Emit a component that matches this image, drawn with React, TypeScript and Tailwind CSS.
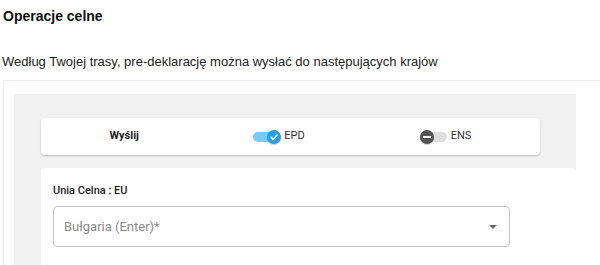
import React from "react";

function Toggle({ on, label }: { on: boolean; label: string }) {
  return (
    <div className="flex items-center">
      <div className="relative w-[28px] h-[14px] flex items-center">
        <div
          className={
            on
              ? "w-[27px] h-[10px] rounded-full bg-[#80c9f0]"
              : "w-[27px] h-[10px] rounded-full bg-[#dedede]"
          }
        />
        {on ? (
          <div className="absolute right-0 top-0 w-[14px] h-[14px] rounded-full bg-[#2b9de3] flex items-center justify-center shadow-[0_1px_1px_rgba(0,0,0,0.2)]">
            <svg width="10" height="10" viewBox="0 0 10 10">
              <path d="M2 5.2 L4.2 7.3 L8 3" fill="none" stroke="#ffffff" strokeWidth="1.6" strokeLinecap="round" strokeLinejoin="round" />
            </svg>
          </div>
        ) : (
          <div className="absolute left-0 top-0 w-[14px] h-[14px] rounded-full bg-[#545454] flex items-center justify-center shadow-[0_1px_1px_rgba(0,0,0,0.2)]">
            <div className="w-[8px] h-[2px] bg-white" />
          </div>
        )}
      </div>
      <span className="ml-[3px] text-[11px] text-[#333] font-['Roboto',sans-serif]">{label}</span>
    </div>
  );
}

export default function App() {
  return (
    <div className="w-[600px] h-[265px] overflow-hidden bg-white">
      <div className="h-[26px] pt-[6px] pl-[3px] leading-[20px] text-[14px] font-bold text-[#111] font-['Liberation_Sans',Arial,sans-serif]">
        Operacje celne
      </div>
      <div className="mt-[27px] pl-[2px] h-[17px] leading-[17px] text-[13px] text-[#222] font-['Liberation_Sans',Arial,sans-serif]">
        Według Twojej trasy, pre-deklarację można wysłać do następujących krajów
      </div>
      <div className="mt-[10px] ml-[3px] border-l border-t border-[#efefef] pl-[10px] pt-[13px]">
        <div className="w-[562px] bg-[#f1f1f1] pt-[24px] pl-[27px] pb-[40px]">
          <div className="w-[499px] h-[37px] bg-white rounded-[4px] shadow-[0_1px_2px_rgba(0,0,0,0.22)] grid grid-cols-3 items-center">
            <div className="text-center text-[11px] font-bold text-[#222] font-['Roboto',sans-serif]">Wyślij</div>
            <div className="pl-[46px]">
              <Toggle on={true} label="EPD" />
            </div>
            <div className="pl-[46px]">
              <Toggle on={false} label="ENS" />
            </div>
          </div>
          <div className="mt-[13px] bg-white rounded-[4px] pl-[12px] pt-[16px] h-[120px]">
            <div className="h-[14px] leading-[14px] text-[11px] font-medium text-[#222] font-['Roboto',sans-serif]">
              Unia Celna : EU
            </div>
            <div className="mt-[8px] w-[457px] h-[41px] border border-[#c4c4c4] rounded-[4px] flex items-center justify-between pl-[10px] pr-[12px]">
              <span className="text-[13px] text-[#8a8a8a] font-['Roboto',sans-serif]">Bułgaria (Enter)*</span>
              <svg width="8" height="4" viewBox="0 0 8 4">
                <path d="M0 0 L8 0 L4 4 Z" fill="#6b6b6b" />
              </svg>
            </div>
          </div>
        </div>
      </div>
    </div>
  );
}
